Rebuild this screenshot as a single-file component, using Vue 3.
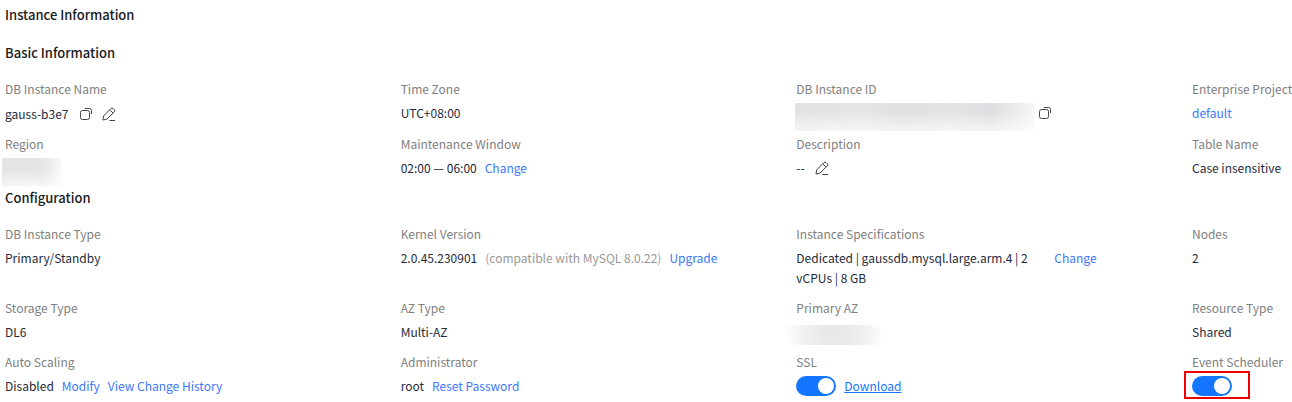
<script setup>
import { ref } from 'vue'

const ssl = ref(true)
const scheduler = ref(true)

const basic = [
  { label: 'DB Instance Name', value: 'gauss-b3e7', icons: ['copy', 'edit'], kind: 'name' },
  { label: 'Time Zone', value: 'UTC+08:00' },
  { label: 'DB Instance ID', mask: 'id', icons: ['copy'] },
  { label: 'Enterprise Project', links: ['default'] },
  { label: 'Region', mask: 'region' },
  { label: 'Maintenance Window', value: '02:00 — 06:00', links: ['Change'] },
  { label: 'Description', value: '--', icons: ['edit'] },
  { label: 'Table Name', value: 'Case insensitive' },
]

const config = [
  { label: 'DB Instance Type', value: 'Primary/Standby' },
  { label: 'Kernel Version', value: '2.0.45.230901', note: '(compatible with MySQL 8.0.22)', links: ['Upgrade'] },
  { label: 'Instance Specifications', value: 'Dedicated | gaussdb.mysql.large.arm.4 | 2 vCPUs | 8 GB', links: ['Change'], kind: 'spec' },
  { label: 'Nodes', value: '2' },
  { label: 'Storage Type', value: 'DL6' },
  { label: 'AZ Type', value: 'Multi-AZ' },
  { label: 'Primary AZ', mask: 'az' },
  { label: 'Resource Type', value: 'Shared' },
  { label: 'Auto Scaling', value: 'Disabled', links: ['Modify', 'View Change History'] },
  { label: 'Administrator', value: 'root', links: ['Reset Password'] },
]

const sections = [
  { title: 'Basic Information', items: basic },
  { title: 'Configuration', items: config, switches: true },
]
</script>

<template>
  <main class="page">
    <h1>Instance Information</h1>
    <section v-for="section in sections" :key="section.title">
      <h2>{{ section.title }}</h2>
      <div class="grid">
        <div v-for="item in section.items" :key="item.label" class="item">
          <div class="label">{{ item.label }}</div>
          <div class="value" :class="item.kind">
            <span v-if="item.mask" class="mask" :class="item.mask"></span>
            <span v-if="item.value" class="text">{{ item.value }}</span>
            <span v-if="item.note" class="note">{{ item.note }}</span>
            <span v-if="item.icons" class="icons">
              <button v-for="icon in item.icons" :key="icon" type="button" :aria-label="icon + ' ' + item.label">
                <svg v-if="icon === 'copy'" width="14" height="14" viewBox="0 0 14 14">
                  <rect x="1.5" y="3.5" width="9" height="9" rx="2" />
                  <path d="M6 1.500h4.500q2 0 2 2V7" />
                </svg>
                <svg v-else width="14" height="14" viewBox="0 0 14 14">
                  <path d="M1 13l.6-4L8.800 1.600q1.200-1.200 2.400 0l1 1q1.200 1.200 0 2.400L4.800 12.200z" />
                  <path d="M8 3l2.900 2.900M7.500 13.500H13" />
                </svg>
              </button>
            </span>
            <a v-for="link in item.links" :key="link" href="#">{{ link }}</a>
          </div>
        </div>
        <template v-if="section.switches">
          <div class="item">
            <label class="label" for="ssl">SSL</label>
            <div class="value">
              <input id="ssl" v-model="ssl" type="checkbox" role="switch" />
              <a class="download" href="#">Download</a>
            </div>
          </div>
          <div class="item">
            <label class="label" for="scheduler">Event Scheduler</label>
            <div class="value marked">
              <input id="scheduler" v-model="scheduler" type="checkbox" role="switch" />
            </div>
          </div>
        </template>
      </div>
    </section>
  </main>
</template>

<style>
body {
  margin: 0;
  background: #fff;
}
</style>

<style scoped>
.page {
  padding: 5px 0 6px 5px;
  font: 12px/20px "Noto Sans CJK SC", "Noto Sans", sans-serif;
  color: #252b3a;
}
h1,
h2 {
  margin: 0;
  font-size: 13px;
  line-height: 20px;
  font-weight: 500;
  color: #191919;
}
h1 {
  margin-bottom: 18px;
}
h2 {
  margin-bottom: 16px;
}
section + section {
  margin-top: 10px;
}
.grid {
  display: grid;
  grid-template-columns: repeat(3, 1fr) 100px;
  row-gap: 10px;
}
.item {
  min-width: 0;
}
.label {
  display: block;
  margin-bottom: 4px;
  color: #808080;
  white-space: nowrap;
}
.value {
  position: relative;
  display: flex;
  align-items: flex-start;
  gap: 8px;
  min-height: 20px;
  white-space: nowrap;
}
.name {
  padding-top: 1px;
}
.note {
  color: #999;
}
.spec {
  gap: 20px;
}
.spec .text {
  width: 238px;
  white-space: normal;
}
a {
  color: #3b78ff;
  text-decoration: none;
}
.download {
  color: #1476ff;
  text-decoration: underline;
}
.icons {
  display: flex;
  gap: 9px;
  margin-left: 2px;
}
button {
  display: flex;
  align-items: center;
  height: 20px;
  padding: 0;
  border: 0;
  background: none;
  cursor: pointer;
}
svg {
  fill: none;
  stroke: #444;
  stroke-width: 1;
}
.mask {
  height: 20px;
}
.mask::before {
  content: "";
  position: absolute;
  top: 0;
  left: -3px;
  width: 60px;
  height: 28px;
  background: linear-gradient(#fff0 40%, #fffa), linear-gradient(90deg, #e4e4e6 40%, #e6e6e8 70%, #fafafa);
}
.mask.id {
  width: 232px;
}
.mask.id::before {
  left: -1px;
  width: 240px;
  background: linear-gradient(#fff0 30%, #fffa), linear-gradient(90deg, #e2e2e4, #e4e5e7 30%, #dfdfe2 45%, #e3e4e6 65%, #dedee2 82%, #f6f6f6);
}
.mask.az::before {
  top: 3px;
  left: -11px;
  width: 96px;
  height: 20px;
  background: radial-gradient(ellipse 50px 36px at 50px 9px, #e8e8ea 20%, #f1f1f2 65%, #fff);
}
input {
  appearance: none;
  width: 40px;
  height: 20px;
  margin: 0;
  border-radius: 10px;
  background: #b5b5b5;
  cursor: pointer;
}
input::before {
  content: "";
  display: block;
  width: 16px;
  height: 16px;
  margin: 2px;
  border-radius: 50%;
  background: #fff;
}
input:checked {
  background: #1476ff;
}
input:checked::before {
  margin-left: 22px;
}
.marked::after {
  content: "";
  position: absolute;
  top: -5px;
  left: -8px;
  width: 62px;
  height: 24px;
  border: 2px solid #f00000;
  pointer-events: none;
}
</style>
